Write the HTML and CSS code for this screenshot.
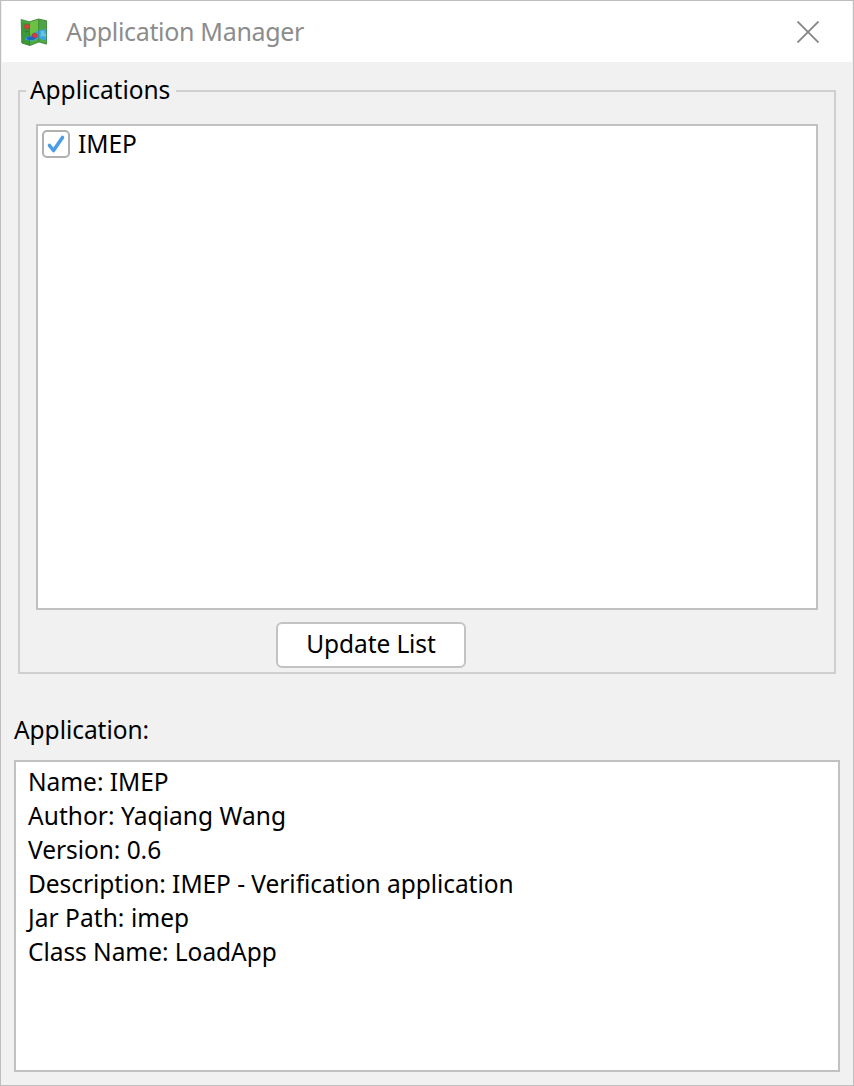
FILE: index.html
```html
<!DOCTYPE html>
<html lang="en">
<head>
<meta charset="utf-8">
<title>Application Manager</title>
<link rel="stylesheet" href="styles.css">
</head>
<body>
<main class="window">
  <header class="titlebar">
    <svg class="app-icon" width="28" height="29" viewBox="0 0 28 29">
      <path d="M1.200 1.500 9.500 3.800 18.500 1l8 1.800v23.400l-7.500-2.200-9 3.500-8.200-2.500z" fill="#4cab3e"/>
      <path d="M9.500 3.800 18.500 1v12l-8.500 4z" fill="#6cc145"/>
      <path d="m18.500 1 8 1.800V13l-7.500-1z" fill="#4fa544"/>
      <path d="M1.500 4 9.500 6v21.500l-7.700-2.500z" fill="#3c993a"/>
      <path d="M5.500 19.500q4-1.500 8-2.500 3-5 7-5l6-1v10.500l-3.500 1-4-2.500-6.500 3-7-1z" fill="#3da5e1"/>
      <path d="M6 19.500q4-1 7-1.500l5 .5-4.500 3.500-6-.2z" fill="#1c68bd"/>
      <path d="m21 13 3 0 .5 3 2-1v4l-4-1-2 1z" fill="#63c4e6"/>
      <path d="M9.500 4v23.500M18.700 1.500v22.500" fill="none" stroke="#26662f" stroke-opacity=".45"/>
      <path d="M1.200 1.500 9.500 3.800 18.500 1l8 1.800v23.400l-7.500-2.200-9 3.500-8.200-2.500z" fill="none" stroke="#3b7f3a" stroke-width=".8"/>
      <circle cx="6.800" cy="8.500" r="2.500" fill="#dc4039" stroke="#8c482f" stroke-width=".5"/>
      <path d="M4.700 13q2 2 4 0" fill="none" stroke="#2a6d35" stroke-width=".9"/>
      <circle cx="14.800" cy="17.500" r="2.500" fill="#e03842" stroke="#753457" stroke-width=".5"/>
    </svg>
    <h1 class="title">Application Manager</h1>
    <svg class="close" width="22" height="22" viewBox="0 0 22 22"><path d="M.5.5 21.500 21.500M21.500.5.5 21.500"/></svg>
  </header>
  <fieldset class="group">
    <legend class="legend">Applications</legend>
    <div class="list">
      <label class="item">
        <svg class="check" width="28" height="28" viewBox="0 0 28 28"><rect x="1" y="1" width="26" height="26" rx="4"/><path d="m7.500 15.500 4 5 9-13"/></svg>
        <span>IMEP</span>
      </label>
    </div>
    <button class="update" type="button">Update List</button>
  </fieldset>
  <h2 class="caption">Application:</h2>
  <div class="details">
    <div>Name: IMEP</div>
    <div class="author">Author: Yaqiang Wang</div>
    <div>Version: 0.6</div>
    <div>Description: IMEP - Verification application</div>
    <div class="jar">Jar Path: imep</div>
    <div>Class Name: LoadApp</div>
  </div>
</main>
</body>
</html>
```
FILE: styles.css
```css
* { box-sizing: border-box; }
body { margin: 0; }
.window {
  width: 854px;
  height: 1086px;
  display: flex;
  flex-direction: column;
  border: 1px solid #bebebe;
  background: #f1f1f1;
  color: #000;
  font: 24.500px/34px "Noto Sans", sans-serif;
  letter-spacing: -.05px;
}
.titlebar {
  height: 61px;
  margin: 0 1px;
  padding: 0 33px 0 18px;
  display: flex;
  align-items: center;
  background: #fff;
}
.app-icon { flex: none; margin-top: 1px; }
.title {
  flex: 1;
  margin: 0 0 0 18px;
  padding-bottom: 2px;
  font-size: 25px;
  font-weight: 400;
  letter-spacing: -.32px;
  color: #8c8c8c;
}
.close { fill: none; stroke: #858585; stroke-width: 1.800; }
.group {
  width: 818px;
  height: 600px;
  margin: 12px 0 0 17px;
  padding: 16px 16px 0;
  border: 2px solid #cfcfcf;
}
.legend {
  width: 150px;
  height: 34px;
  margin-left: -10px;
  padding: 0 0 0 4px;
  line-height: 32px;
  white-space: nowrap;
}
.list {
  height: 486px;
  padding: 1px 4px;
  border: 2px solid #c1c1c1;
  background: #fff;
}
.item { display: flex; align-items: center; gap: 8px; }
.check rect { fill: #fff; stroke: #b0b0b0; stroke-width: 2; }
.check path { fill: none; stroke: #4b9de5; stroke-width: 3.600; stroke-linecap: round; stroke-linejoin: round; }
.update {
  display: block;
  width: 190px;
  height: 46px;
  margin: 12px 0 0 240px;
  padding: 0 0 2px;
  border: 2px solid #c3c3c3;
  border-radius: 6px;
  background: #fff;
  color: #000;
  font: inherit;
  letter-spacing: -.1px;
}
.caption { margin: 39px 0 0 13px; font: inherit; }
.details {
  width: 826px;
  height: 312px;
  margin: 13px 0 0 13px;
  padding: 3px 12px;
  border: 2px solid #c1c1c1;
  background: #fff;
}
.author { letter-spacing: .05px; }
.jar { letter-spacing: .05px; }
```
